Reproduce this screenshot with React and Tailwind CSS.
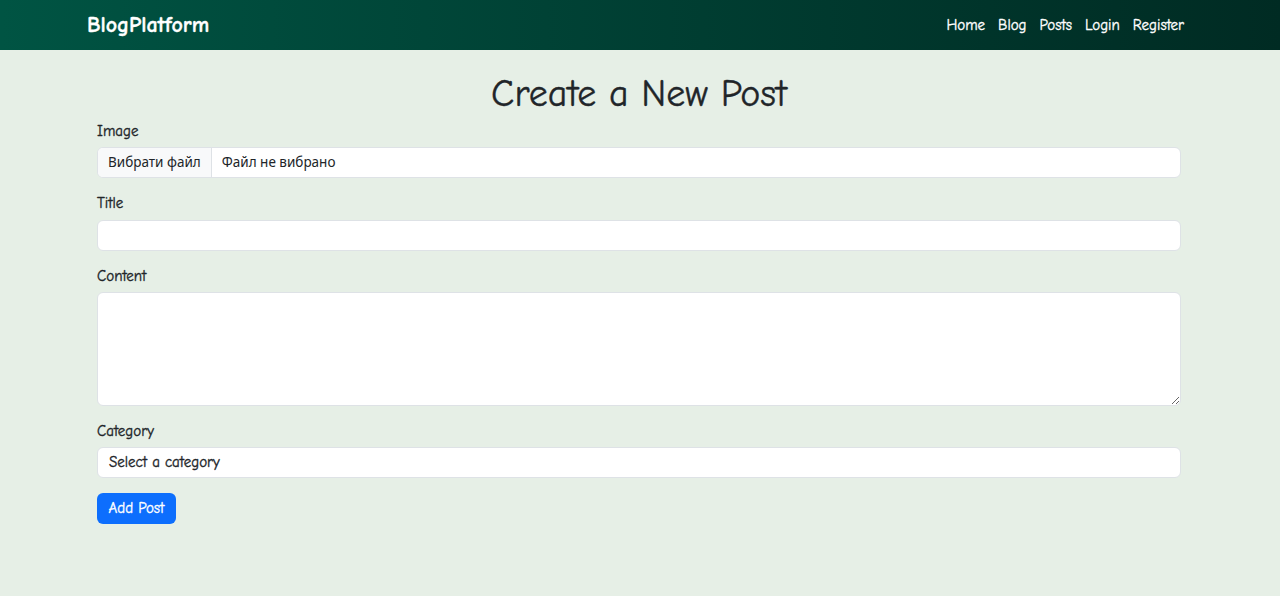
export default function App() {
  const font = { fontFamily: '"Comic Sans MS", "Comic Neue", "Comic Relief", "Noto Sans", cursive' };
  return (
    <div className="min-h-[596px] bg-[#e6efe6] text-[#212529] [-webkit-text-stroke:0.35px]" style={font}>
      <nav className="h-[50px] bg-gradient-to-r from-[#005443] to-[#002b23] flex items-center pl-[87px] pr-[96px] justify-between">
        <span className="text-white text-[22px] font-bold">BlogPlatform</span>
        <div className="flex gap-[13px] text-white text-[15px]">
          <a>Home</a>
          <a>Blog</a>
          <a>Posts</a>
          <a>Login</a>
          <a>Register</a>
        </div>
      </nav>
      <div className="pl-[97px] pr-[99px]">
        <h1 className="text-center text-[38px] leading-[48px] mt-[20px]">Create a New Post</h1>
        <form className="flex flex-col">
          <label className="text-[15px] leading-[22px] mt-[2px] mb-[5px]">Image</label>
          <div className="h-[31px] bg-white border border-[#dee2e6] rounded-[6px] flex items-center text-[13.5px] overflow-hidden">
            <span className="h-full px-[10px] bg-[#f8f9fa] border-r border-[#dee2e6] flex items-center font-['Noto_Sans'] font-normal [-webkit-text-stroke:0px]">Вибрати файл</span>
            <span className="px-[10px] font-['Noto_Sans'] font-normal [-webkit-text-stroke:0px]">Файл не вибрано</span>
          </div>
          <label className="text-[15px] leading-[22px] mt-[14px] mb-[6px]">Title</label>
          <input className="h-[31px] bg-white border border-[#dee2e6] rounded-[6px]" />
          <label className="text-[15px] leading-[22px] mt-[14px] mb-[5px]">Content</label>
          <textarea className="h-[114px] bg-white border border-[#dee2e6] rounded-[6px]" />
          <label className="text-[15px] leading-[22px] mt-[14px] mb-[5px]">Category</label>
          <div className="h-[31px] bg-white border border-[#dee2e6] rounded-[6px] flex items-center px-[11px] text-[15px]">Select a category</div>
          <button type="button" className="mt-[15px] self-start h-[31px] w-[79px] bg-[#0d6efd] text-white rounded-[6px] text-[15px]">Add Post</button>
        </form>
      </div>
    </div>
  );
}
